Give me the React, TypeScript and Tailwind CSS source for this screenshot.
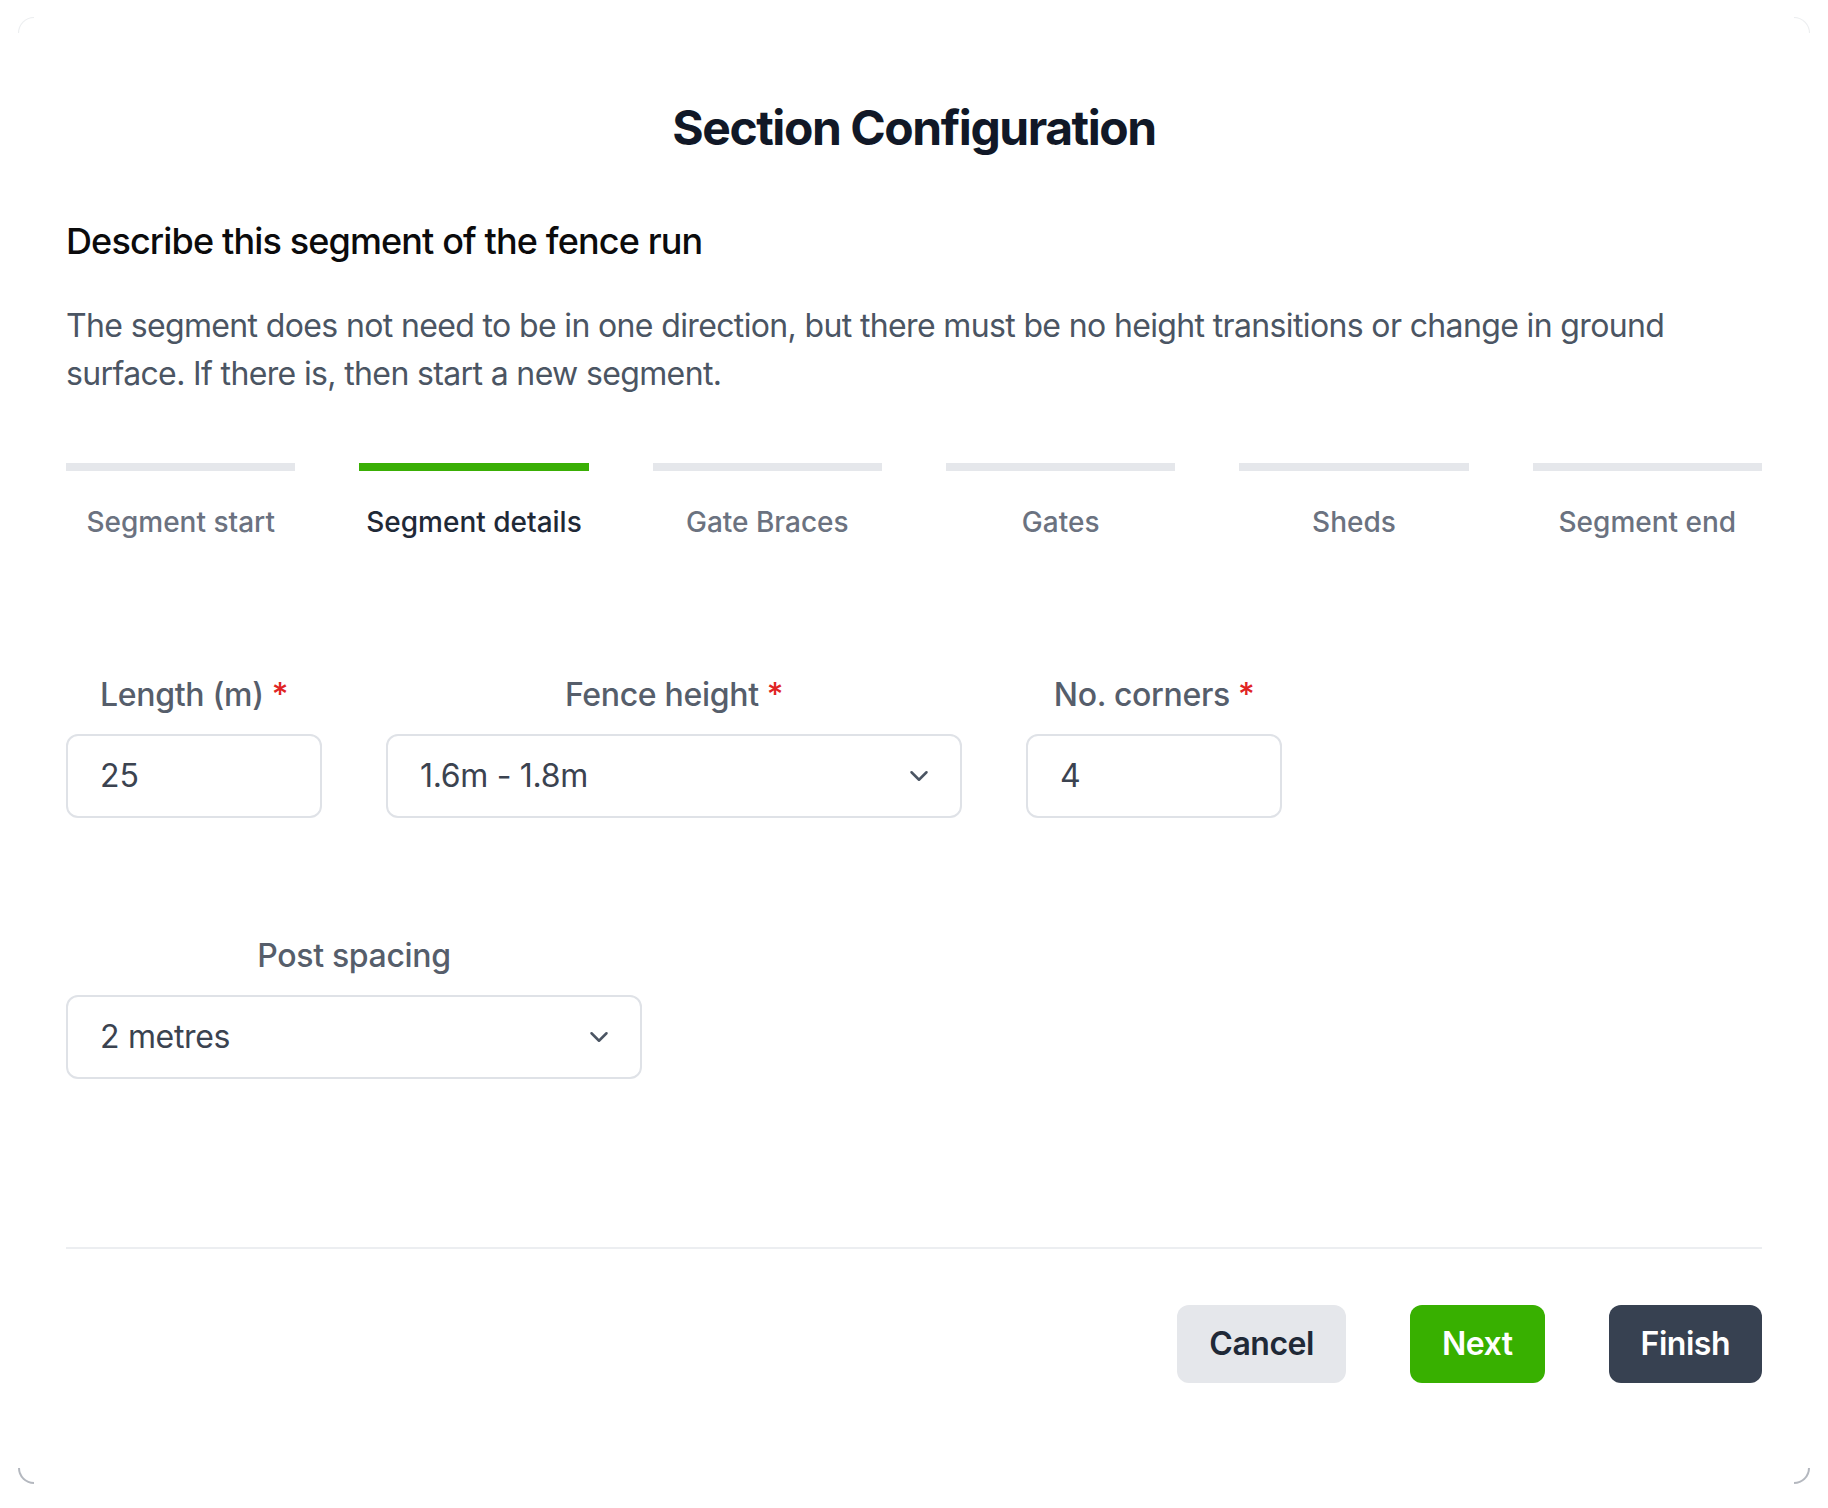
import React from "react";
import { ChevronDown } from "lucide-react";

const steps = [
  { label: "Segment start", active: false },
  { label: "Segment details", active: true },
  { label: "Gate Braces", active: false },
  { label: "Gates", active: false },
  { label: "Sheds", active: false },
  { label: "Segment end", active: false },
];

function Label({ text, required }: { text: string; required?: boolean }) {
  return (
    <div className="text-[32px] leading-[48px] font-medium tracking-[-0.01em] text-[#565e6b] whitespace-nowrap">
      {text}
      {required && <span className="ml-[8px] text-[#e02424]">*</span>}
    </div>
  );
}

function TextBox({ value, width }: { value: string; width: string }) {
  return (
    <div
      className={`${width} mt-[15px] flex h-[84px] items-center rounded-[12px] border-2 border-[#dfe2e7] bg-white px-8 text-[32px] text-[#3b4350]`}
    >
      {value}
    </div>
  );
}

function SelectBox({ value, width }: { value: string; width: string }) {
  return (
    <div
      className={`${width} mt-[15px] flex h-[84px] items-center justify-between rounded-[12px] border-2 border-[#dfe2e7] bg-white pl-8 pr-[26px] text-[32px] tracking-[-0.01em] text-[#3b4350]`}
    >
      <span>{value}</span>
      <ChevronDown size={30} strokeWidth={2} className="text-[#4b5563]" />
    </div>
  );
}

export default function App() {
  return (
    <div
      className="min-h-screen bg-white px-[18px] pt-[17px]"
      style={{ fontFamily: "Inter, 'Noto Sans', sans-serif" }}
    >
      <div className="relative rounded-[16px] bg-white px-12 pt-[79px] pb-[101px]">
        {/* corner shading */}
        <div className="pointer-events-none absolute bottom-0 left-0 h-[16px] w-[16px] rounded-bl-[16px] border-b-2 border-l-2 border-[#6b7280]/50" />
        <div className="pointer-events-none absolute bottom-0 right-0 h-[16px] w-[16px] rounded-br-[16px] border-b-2 border-r-2 border-[#6b7280]/50" />
        <div className="pointer-events-none absolute top-0 left-0 h-[16px] w-[16px] rounded-tl-[16px] border-t border-l border-[#9ca3af]/20" />
        <div className="pointer-events-none absolute top-0 right-0 h-[16px] w-[16px] rounded-tr-[16px] border-t border-r border-[#9ca3af]/20" />

        <h1 className="text-center text-[48px] font-bold leading-[64px] tracking-[-0.03em] text-[#111827]">
          Section Configuration
        </h1>

        <h2 className="mt-[53px] text-[36px] font-medium leading-[56px] tracking-[-0.024em] text-[#0b0b0c]">
          Describe this segment of the fence run
        </h2>

        <p className="mt-[33px] text-[32px] leading-[48px] tracking-[-0.02em] text-[#4b5563]">
          The segment does not need to be in one direction, but there must be no height transitions or change in ground
          surface. If there is, then start a new segment.
        </p>

        <div className="mt-[65px] grid grid-cols-6 gap-x-16">
          {steps.map((s) => (
            <div key={s.label} className="flex flex-col">
              <div className={`h-[8px] ${s.active ? "bg-[#3aaf05]" : "bg-[#e5e7eb]"}`} />
              <div
                className={`mt-[31px] text-center text-[28px] font-medium leading-[40px] ${
                  s.active ? "text-[#1f2937]" : "text-[#6b7280]"
                }`}
              >
                {s.label}
              </div>
            </div>
          ))}
        </div>

        <div className="mt-[129px] flex gap-16">
          <div className="flex w-[256px] flex-col items-center">
            <Label text="Length (m)" required />
            <TextBox value="25" width="w-[256px]" />
          </div>
          <div className="flex w-[576px] flex-col items-center">
            <Label text="Fence height" required />
            <SelectBox value="1.6m - 1.8m" width="w-[576px]" />
          </div>
          <div className="flex w-[256px] flex-col items-center">
            <Label text="No. corners" required />
            <TextBox value="4" width="w-[256px]" />
          </div>
        </div>

        <div className="mt-[114px] flex w-[576px] flex-col items-center">
          <Label text="Post spacing" />
          <SelectBox value="2 metres" width="w-[576px]" />
        </div>

        <div className="mt-[168px] h-[2px] bg-[#eceef1]" />

        <div className="mt-[56px] flex justify-end gap-16">
          <button className="h-[78px] rounded-[12px] bg-[#e5e7eb] px-8 text-[32px] font-semibold tracking-[-0.015em] text-[#1f2937]">
            Cancel
          </button>
          <button className="h-[78px] rounded-[12px] bg-[#38b000] px-8 text-[32px] font-semibold tracking-[-0.015em] text-white">
            Next
          </button>
          <button className="h-[78px] rounded-[12px] bg-[#374151] px-8 text-[32px] font-semibold tracking-[-0.015em] text-white">
            Finish
          </button>
        </div>
      </div>
    </div>
  );
}
